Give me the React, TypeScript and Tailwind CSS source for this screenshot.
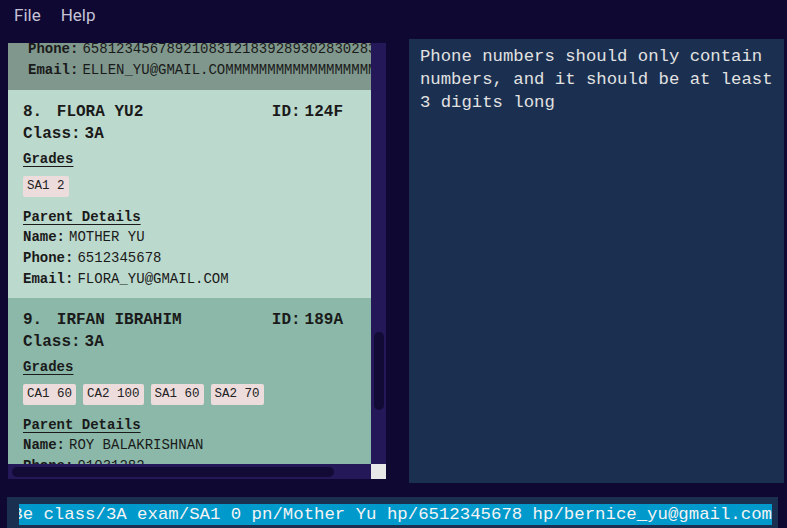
import React from "react";

type Person = {
  index: number;
  name: string;
  id: string;
  cls: string;
  grades: string[];
  parent: string;
  phone: string;
  email: string;
  bg: string;
};

const people: Person[] = [
  {
    index: 8,
    name: "FLORA YU2",
    id: "124F",
    cls: "3A",
    grades: ["SA1 2"],
    parent: "MOTHER YU",
    phone: "6512345678",
    email: "FLORA_YU@GMAIL.COM",
    bg: "bg-[#bcd9cd]",
  },
  {
    index: 9,
    name: "IRFAN IBRAHIM",
    id: "189A",
    cls: "3A",
    grades: ["CA1 60", "CA2 100", "SA1 60", "SA2 70"],
    parent: "ROY BALAKRISHNAN",
    phone: "91031282",
    email: "ROY_B@GMAIL.COM",
    bg: "bg-[#8bb8a8]",
  },
];

/** one row of the parent details */
function Field({ label, value }: { label: string; value: string }) {
  return (
    <div className="flex gap-1 h-[21px] leading-[21px] text-[14px] whitespace-nowrap">
      <span className="font-bold">{label}</span>
      <span>{value}</span>
    </div>
  );
}

function PersonCard({ p }: { p: Person }) {
  return (
    <div className={`${p.bg} w-full pt-[11px] pb-[8px] pl-[15px] text-[#1a1a1a]`}>
      {/* name + id */}
      <div className="flex justify-between pr-[28px] h-[22px] leading-[22px] text-[16px] font-bold whitespace-pre">
        <div className="flex gap-[5px]">
          <span>{`${p.index}. `}</span>
          <span>{p.name}</span>
        </div>
        <div className="flex gap-1">
          <span>ID:</span>
          <span>{p.id}</span>
        </div>
      </div>
      <div className="flex gap-1 h-[22px] leading-[22px] text-[16px] font-bold">
        <span>Class:</span>
        <span>{p.cls}</span>
      </div>

      <div className="mt-[4px] h-[20px] leading-[20px] text-[14px] font-bold underline underline-offset-[3px]">
        Grades
      </div>
      <div className="mt-[7px] flex gap-[7px]">
        {p.grades.map((g) => (
          <span
            key={g}
            className="h-[21px] leading-[21px] px-1 rounded-[2px] bg-[#ecdcdc] text-[12.5px] text-[#222] whitespace-pre"
          >
            {g}
          </span>
        ))}
      </div>

      <div className="mt-[10px] h-[20px] leading-[20px] text-[14px] font-bold underline underline-offset-[3px] whitespace-pre">
        Parent Details
      </div>
      <Field label="Name:" value={p.parent} />
      <Field label="Phone:" value={p.phone} />
      <Field label="Email:" value={p.email} />
    </div>
  );
}

export default function App() {
  return (
    <div className="w-[787px] h-[528px] overflow-hidden bg-[#0e0832] flex flex-col font-['Liberation_Mono',monospace]">
      {/* menu bar */}
      <div className="h-[39px] flex items-start pt-[3px] pl-[14px] gap-[20px] text-[17px] text-[#c6c2d6] font-['Roboto','Noto_Sans',sans-serif]">
        <span>File</span>
        <span>Help</span>
      </div>

      <div className="flex h-[444px]">
        {/* person list, scrolled so only the tail of card 7 shows */}
        <div className="ml-[8px] w-[378px] pt-[4px] flex flex-col">
          <div className="flex h-[421px]">
            <div className="w-[363px] overflow-hidden">
              <div className="-mt-[4px] flex flex-col">
                <div className="bg-[#7f978c] pl-[20px] pb-[9px] text-[#1a1a1a]">
                  <Field label="Phone:" value="658123456789210831218392893028302839201" />
                  <Field label="Email:" value="ELLEN_YU@GMAIL.COMMMMMMMMMMMMMMMMMMMMMMMM" />
                </div>
                {people.map((p) => (
                  <PersonCard key={p.index} p={p} />
                ))}
              </div>
            </div>
            <div className="w-[15px] bg-[#241858] pt-[289px]">
              <div className="ml-[3px] w-[10px] h-[78px] rounded-[5px] bg-[#120b35]" />
            </div>
          </div>
          <div className="flex h-[15px]">
            <div className="w-[363px] bg-[#241858] pt-[3px] pl-[4px]">
              <div className="w-[322px] h-[10px] rounded-[5px] bg-[#120b35]" />
            </div>
            <div className="w-[15px] bg-[#e8e8e8]" />
          </div>
        </div>

        {/* result display */}
        <div className="ml-[23px] w-[375px] h-full bg-[#1b3050] pl-[11px] pt-[6px] text-[17.3px] leading-[23px] text-[#e2e2e2] whitespace-pre">
          <div>Phone numbers should only contain</div>
          <div>numbers, and it should be at least</div>
          <div>3 digits long</div>
        </div>
      </div>

      {/* command box */}
      <div className="mt-[14px] ml-[7px] w-[771px] flex-1 bg-[#1b3050] pt-[7px] pl-[12px]">
        <div className="w-[753px] h-[21px] overflow-hidden flex justify-end">
          <span className="shrink-0 bg-[#0099cc] text-[#f4f4f4] text-[17.35px] leading-[21px] whitespace-pre">
            Be class/3A exam/SA1 0 pn/Mother Yu hp/6512345678 hp/bernice_yu@gmail.com
          </span>
        </div>
      </div>
    </div>
  );
}
